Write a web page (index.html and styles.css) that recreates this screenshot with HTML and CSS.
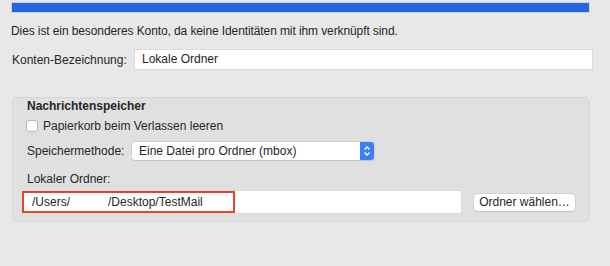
FILE: index.html
```html
<!DOCTYPE html>
<html lang="de">
<head>
    <meta charset="UTF-8">
    <title>Kontoeinstellungen</title>
    <link rel="stylesheet" href="styles.css">
</head>
<body>
    <div class="pane">
        <div class="bar"></div>
        <p class="note">Dies ist ein besonderes Konto, da keine Identitäten mit ihm verknüpft sind.</p>
        <div class="name-row">
            <label class="name-label">Konten-Bezeichnung:</label>
            <div class="field name-field">Lokale Ordner</div>
        </div>

        <div class="group">
            <div class="group-title">Nachrichtenspeicher</div>
            <label class="check-row">
                <span class="checkbox"></span>
                Papierkorb beim Verlassen leeren
            </label>
            <div class="select-row">
                <span class="select-label">Speichermethode:</span>
                <div class="select">
                    <span class="select-text">Eine Datei pro Ordner (mbox)</span>
                    <span class="select-arrows">
                        <svg width="8" height="12" viewBox="0 0 8 12">
                            <path d="M1.5 4.5 L4 2 L6.5 4.5 M1.5 7.5 L4 10 L6.5 7.5" fill="none" stroke="#fff" stroke-width="1.4"/>
                        </svg>
                    </span>
                </div>
            </div>
            <div class="folder-label">Lokaler Ordner:</div>
            <div class="path-row">
                <div class="field path-field">/Users/<span class="blank"></span>/Desktop/TestMail<span class="highlight"></span></div>
                <button class="btn">Ordner wählen…</button>
            </div>
        </div>
    </div>
</body>
</html>
```

FILE: styles.css
```css
body {
    margin: 0;
    background: #e8e8e8;
    font-family: "Liberation Sans", Arial, sans-serif;
    font-size: 12px;
    color: #262626;
}
.pane {
    padding: 2px 18px 45px 11px;
}
.bar {
    width: 577px;
    height: 9px;
    background: #2466e2;
    border: 1px solid #d2d2d2;
}
.note {
    margin: 10px 0 0 0;
    line-height: 16px;
    letter-spacing: -0.1px;
}
.name-row {
    display: flex;
    align-items: center;
    margin-top: 11px;
    margin-left: 1px;
}
.name-label {
    width: 123px;
    flex-shrink: 0;
    white-space: nowrap;
}
.field {
    background: #fff;
    box-shadow: 0 0 0 1px #dcdcdc;
    box-sizing: border-box;
    flex-shrink: 0;
}
.name-field {
    width: 457px;
    height: 19px;
    line-height: 19px;
    padding-left: 7px;
}
.group {
    margin-top: 28px;
    margin-left: 1px;
    width: 578px;
    box-sizing: border-box;
    padding: 0 0 8px 14px;
    background: #e0e0e0;
    border: 1px solid #d6d6d6;
    border-radius: 5px;
}
.group-title {
    font-weight: bold;
    line-height: 15px;
    margin-top: 1px;
}
.check-row {
    display: flex;
    align-items: center;
    gap: 5px;
    line-height: 16px;
    margin-top: 4px;
    margin-left: -1px;
}
.checkbox {
    width: 10px;
    height: 10px;
    background: #fff;
    border: 0.5px solid #b8b8b8;
    border-radius: 3px;
}
.select-row {
    display: flex;
    align-items: center;
    margin-top: 8px;
}
.select-label {
    width: 105px;
    flex-shrink: 0;
    white-space: nowrap;
}
.select {
    display: flex;
    width: 242px;
    height: 18px;
    background: #fff;
    border-radius: 3px;
    box-shadow: 0 0 0 0.5px #c6c6c6, 0 1px 1px rgba(0, 0, 0, 0.15);
}
.select-text {
    flex: 1;
    line-height: 18px;
    padding-left: 7px;
}
.select-arrows {
    width: 14px;
    display: flex;
    align-items: center;
    justify-content: center;
    background: #3b7ef5;
    border-radius: 0 3px 3px 0;
}
.folder-label {
    line-height: 16px;
    margin-top: 11px;
}
.path-row {
    display: flex;
    align-items: center;
    gap: 13px;
    margin-top: 4px;
    margin-left: -4px;
}
.path-field {
    position: relative;
    width: 438px;
    height: 22px;
    line-height: 22px;
    padding-left: 9px;
}
.blank {
    display: inline-block;
    width: 38px;
    height: 18px;
    vertical-align: middle;
    background: #fff;
}
.highlight {
    position: absolute;
    left: -1px;
    top: 0;
    width: 213px;
    height: 22px;
    box-sizing: border-box;
    border: 2px solid #e8432c;
}
.btn {
    width: 101px;
    height: 17px;
    padding: 0;
    font-family: inherit;
    font-size: 12px;
    color: #262626;
    background: #fff;
    border: none;
    border-radius: 4px;
    box-shadow: 0 0 0 0.5px #c2c2c2, 0 1px 1px rgba(0, 0, 0, 0.15);
}
```
